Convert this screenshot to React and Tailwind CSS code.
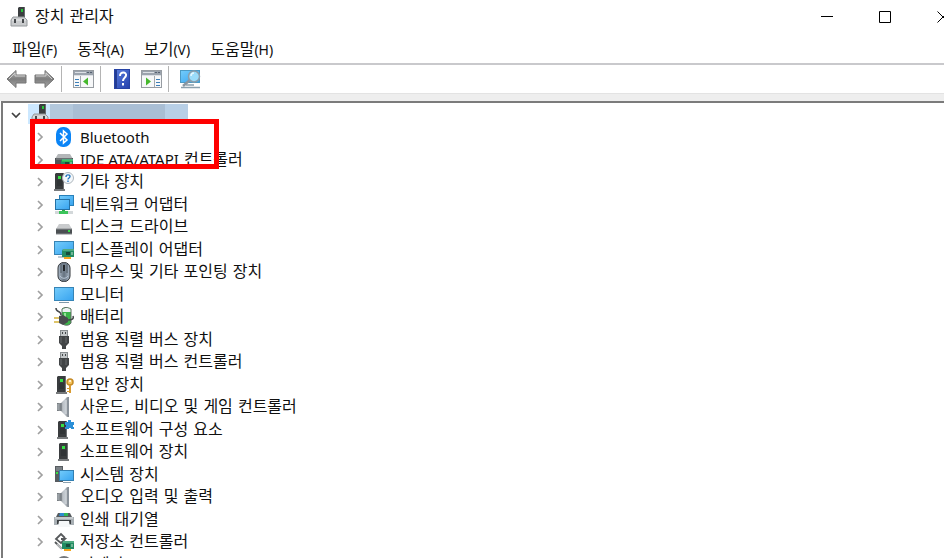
import { useState } from "react";

const ICON = "block h-5 w-5 shrink-0";

function Defs() {
  return (
    <svg className="absolute h-0 w-0" aria-hidden="true">
      <defs>
        <linearGradient id="screen" x1="0" y1="0" x2="1" y2="1">
          <stop offset="0" stopColor="#74ccfb" />
          <stop offset="1" stopColor="#37a3ef" />
        </linearGradient>
        <linearGradient id="steel" x1="0" y1="0" x2="1" y2="0">
          <stop offset="0" stopColor="#6f7478" />
          <stop offset="0.6" stopColor="#c6ccd2" />
          <stop offset="1" stopColor="#7f868d" />
        </linearGradient>
        <linearGradient id="arrow" x1="0" y1="0" x2="0" y2="1">
          <stop offset="0" stopColor="#b9b9b9" />
          <stop offset="0.5" stopColor="#7d7d7d" />
          <stop offset="1" stopColor="#a8a8a8" />
        </linearGradient>
        <linearGradient id="book" x1="0" y1="0" x2="1" y2="1">
          <stop offset="0" stopColor="#5b7fe0" />
          <stop offset="1" stopColor="#2340ab" />
        </linearGradient>
        <linearGradient id="mouse" x1="0" y1="0" x2="1" y2="0">
          <stop offset="0" stopColor="#aebccb" />
          <stop offset="0.5" stopColor="#65727f" />
          <stop offset="1" stopColor="#a9b8c8" />
        </linearGradient>
      </defs>
    </svg>
  );
}

function ComputerIcon() {
  return (
    <svg viewBox="0 0 18 20" className="block h-5 w-[18px] shrink-0">
      <path d="M8 1l1-1h6v13H8z" fill="#3b3e40" />
      <path d="M14 0h1v13h-1z" fill="#696d70" />
      <rect x="11" y="2" width="2" height="3" fill="#25c438" />
      <path d="M3 10h11l3 3v6H1v-6z" fill="#c9cbcd" stroke="#969a9d" />
      <path d="M2 13h14" stroke="#eceeef" />
      <path d="M5 12v4M13 12v4" stroke="#45494c" strokeWidth="2" />
    </svg>
  );
}

function Tower({ x = 0 }) {
  return (
    <g transform={`translate(${x} 0)`}>
      <path d="M1 2l1-1h8v17H1z" fill="#393c3e" />
      <path d="M9 1h1v17H9z" fill="#6d7073" />
      <path d="M0 17h11v2H0z" fill="#777a7c" />
      <path d="M3 9h5M3 11h5M3 13h5" stroke="#292c2e" />
      <rect x="4" y="4" width="3" height="3" fill="#35e044" />
    </g>
  );
}

function Card({ x, y }) {
  return (
    <g transform={`translate(${x} ${y})`}>
      <path d="M1 0h11v8H0V2z" fill="#238b62" />
      <path d="M1 1h11" stroke="#7fc8a0" />
      <rect x="4" y="3" width="4" height="3" fill="#174c3b" />
      <path d="M10 3v3" stroke="#c1e4cb" />
      <path d="M2 8h7v2H2z" fill="#f3a51f" />
    </g>
  );
}

function BluetoothIcon() {
  return (
    <svg viewBox="0 0 20 20" className={ICON}>
      <rect x="2" y="0" width="15" height="20" rx="7" fill="#0a84f6" />
      <path d="M6 6l7 7-3.500 3V4L13 7l-7 7" fill="none" stroke="#fff" strokeWidth="1.500" />
    </svg>
  );
}

function IdeIcon() {
  return (
    <svg viewBox="0 0 20 20" className={ICON}>
      <path d="M4 4h12l3 5H1z" fill="#b3b6b8" />
      <path d="M1 8h18v6H1z" fill="#505457" />
      <path d="M2 9h16" stroke="#858a8d" />
      <Card x={7} y={9} />
      <path d="M8 11h10" stroke="#35e044" />
    </svg>
  );
}

function UnknownIcon() {
  return (
    <svg viewBox="0 0 20 20" className={ICON}>
      <Tower />
      <circle cx="14" cy="6" r="5.500" fill="#f4f8fb" stroke="#aeb6bc" />
      <path d="M12 5c0-3 4-2.500 4-.5 0 1.500-2 1.500-2 3M14 8.500v1.500" fill="none" stroke="#2576bf" strokeWidth="1.400" />
    </svg>
  );
}

function NetworkIcon() {
  return (
    <svg viewBox="0 0 20 20" className={ICON}>
      <rect x="5.500" y="0.500" width="14" height="10" fill="url(#screen)" stroke="#2880b9" />
      <rect x="1.500" y="4.500" width="14" height="10" fill="url(#screen)" stroke="#2471a5" />
      <path d="M8 15h3v2H8z" fill="#29a846" />
      <path d="M1 16h18v3H1z" fill="#d3d8da" />
      <path d="M5 16h9v3H5z" fill="#3bc45a" />
    </svg>
  );
}

function DiskIcon() {
  return (
    <svg viewBox="0 0 20 20" className={ICON}>
      <path d="M5 7h10l3 5H2z" fill="#c9cbcd" />
      <path d="M2 12h16v5H2z" fill="#4b4f52" />
      <path d="M2 12h16M2 17h16" stroke="#888c8f" />
      <rect x="14" y="13" width="2" height="2" fill="#34e044" />
    </svg>
  );
}

function DisplayIcon() {
  return (
    <svg viewBox="0 0 20 20" className={ICON}>
      <rect x="0.500" y="1.500" width="19" height="13" fill="url(#screen)" stroke="#3784b5" />
      <path d="M4 17h6" stroke="#8199a8" />
      <Card x={8} y={9} />
    </svg>
  );
}

function MouseIcon() {
  return (
    <svg viewBox="0 0 20 20" className={ICON}>
      <rect x="4" y="0.500" width="12" height="19" rx="5.500" fill="url(#mouse)" stroke="#303438" />
      <path d="M7 2v9M13 2v9" stroke="#4b545d" />
      <rect x="9" y="3" width="2" height="6" fill="#22262a" />
      <path d="M6 14c2 3 6 3 8 0" fill="none" stroke="#b9c8d7" />
    </svg>
  );
}

function MonitorIcon() {
  return (
    <svg viewBox="0 0 20 20" className={ICON}>
      <rect x="0.500" y="2.500" width="19" height="13" fill="url(#screen)" stroke="#3784b5" />
      <path d="M5 17.500h10" stroke="#8199a8" />
    </svg>
  );
}

function BatteryIcon() {
  return (
    <svg viewBox="0 0 20 20" className={ICON}>
      <path d="M8 2c2-2 6-2 9 0v14c-2 3-7 3-9 0z" fill="#3cb54a" stroke="#5e6b64" />
      <path d="M8.500 2.500c2-2 6-2 8 0V5h-8z" fill="#eef1f4" />
      <path d="M11 6v9" stroke="#96e49a" strokeWidth="2" />
      <path d="M2 1c0 5 5 2 5 7M14 13c4 0 6-1 5-4" fill="none" stroke="#46494b" strokeWidth="1.500" />
      <path d="M5 9l4-1 5 3v4l-5 3-4-2z" fill="#494c4e" />
      <path d="M0 11h5M0 15h5" stroke="#d5b33a" strokeWidth="1.500" />
    </svg>
  );
}

function UsbIcon() {
  return (
    <svg viewBox="0 0 20 20" className={ICON}>
      <rect x="6.500" y="0.500" width="7" height="6" fill="#c3c7c9" stroke="#888d90" />
      <path d="M8 3h1M11 3h1" stroke="#45494b" strokeWidth="2" />
      <path d="M5 6h10v7l-3 3v3H8v-3l-3-3z" fill="#424547" />
      <path d="M7 7v6M12 7v6" stroke="#696d6f" />
    </svg>
  );
}

function SecurityIcon() {
  return (
    <svg viewBox="0 0 20 20" className={ICON}>
      <Tower x={2} />
      <circle cx="16" cy="7" r="3" fill="#f5c45d" stroke="#c58a26" strokeWidth="1.500" />
      <circle cx="16" cy="6" r="1" fill="#fff" />
      <path d="M15 10h2v8h-2zM13 13h3v1h-3zM13 16h3v1h-3z" fill="#d99b31" />
    </svg>
  );
}

function SpeakerIcon() {
  return (
    <svg viewBox="0 0 20 20" className={ICON}>
      <path d="M3 6h4l6-6h2v20h-2l-6-6H3z" fill="url(#steel)" />
      <path d="M7 6v8" stroke="#5f666c" />
      <path d="M4 7v6" stroke="#b6bdc3" />
      <path d="M14 1v18" stroke="#8a929a" strokeWidth="2" />
      <path d="M12 3v14" stroke="#dfe4e8" />
    </svg>
  );
}

function ComponentIcon() {
  return (
    <svg viewBox="0 0 20 20" className={ICON}>
      <Tower x={3} />
      <path d="M11 2h3V0h3v2h3v3h-1v2h1v2h-3V8h-2v1h-4V7h1V5h-1z" fill="#2b8fd7" />
    </svg>
  );
}

function SoftwareIcon() {
  return (
    <svg viewBox="0 0 20 20" className={ICON}>
      <Tower x={4} />
    </svg>
  );
}

function SystemIcon() {
  return (
    <svg viewBox="0 0 20 20" className={ICON}>
      <path d="M1 1h8v16H1z" fill="#575c60" />
      <path d="M2 3h6M2 5h6" stroke="#9ea5aa" />
      <rect x="2" y="7" width="2" height="2" fill="#35e044" />
      <rect x="5.500" y="5.500" width="14" height="10" fill="url(#screen)" stroke="#337fb1" />
      <path d="M9 17.500h8" stroke="#8da1ae" />
    </svg>
  );
}

function PrinterIcon() {
  return (
    <svg viewBox="0 0 20 20" className={ICON}>
      <path d="M4 3h12l2 4H2z" fill="#565b5f" />
      <path d="M6 3h4v3H5z" fill="#2d8ad0" />
      <path d="M10 3h4v3h-4z" fill="#31b85b" />
      <path d="M0 7h20v8H0z" fill="#a8afb4" />
      <path d="M1 8h18" stroke="#e3e6e8" />
      <path d="M3 10h14v4H3z" fill="#3c4043" />
      <path d="M5 11h10l1 6H4z" fill="#f5f7f8" />
    </svg>
  );
}

function StorageIcon() {
  return (
    <svg viewBox="0 0 20 20" className={ICON}>
      <path d="M11 6L7 2 2 7l5 4 4-4H7M1 10l6 6h4" fill="none" stroke="#56595b" strokeWidth="1.800" />
      <path d="M3 12l5 5" stroke="#b5b8ba" strokeWidth="2" />
      <Card x={8} y={9} />
    </svg>
  );
}

function CameraIcon() {
  return (
    <svg viewBox="0 0 20 20" className={ICON}>
      <circle cx="10" cy="9" r="7" fill="#c5c8ca" stroke="#74787b" strokeWidth="2" />
      <circle cx="10" cy="9" r="3" fill="#34383b" />
    </svg>
  );
}

function ArrowIcon({ flip }) {
  return (
    <svg viewBox="0 0 21 20" className={flip ? "block h-5 w-[21px] -scale-x-100" : "block h-5 w-[21px]"}>
      <path d="M1 10l9-8.500V6h10v8H10v4.500z" fill="url(#arrow)" stroke="#747474" strokeLinejoin="round" />
      <path d="M3 10l6-6v3h10" fill="none" stroke="#cecece" />
    </svg>
  );
}

function PanelIcon({ flip }) {
  return (
    <svg viewBox="0 0 21 18" className="block h-[18px] w-[21px]">
      <rect x="0.500" y="0.500" width="20" height="17" fill="#f7f8f9" stroke="#979ca2" />
      <path d="M1 1h19v5H1z" fill="#9ba3ad" />
      <path d="M2 2.500h11M1 5.500h19" stroke="#dce0e5" />
      <path d="M14 2.500h2M17 2.500h2" stroke="#566170" />
      {flip ? (
        <>
          <path d="M13.500 6v11" stroke="#a4a9ae" />
          <path d="M15 9.500h4M15 12.500h4M15 15.500h4" stroke="#3d7fb8" />
          <path d="M5 7.500l5 4-5 4z" fill="#46b82d" />
        </>
      ) : (
        <>
          <path d="M7.500 6v11" stroke="#a4a9ae" />
          <path d="M2 9.500h4M2 12.500h4M2 15.500h4" stroke="#3d7fb8" />
          <path d="M15 7.500l-5 4 5 4z" fill="#46b82d" />
        </>
      )}
    </svg>
  );
}

function HelpIcon() {
  return (
    <svg viewBox="0 0 16 20" className="block h-5 w-4">
      <rect x="0.500" y="0.500" width="15" height="19" fill="url(#book)" stroke="#2743a5" />
      <path d="M2 1v18" stroke="#243c93" strokeWidth="2" />
      <path d="M6 7c0-5 7-4 6-.5-.5 2.500-3 2.500-3 5.500M9 14v2.500" fill="none" stroke="#fff" strokeWidth="2" />
    </svg>
  );
}

function ScanIcon() {
  return (
    <svg viewBox="0 0 21 20" className="block h-5 w-[21px]">
      <rect x="0.500" y="1.500" width="19" height="12" fill="url(#screen)" stroke="#4a9ac5" />
      <path d="M6 16h8M1 18.500h19" stroke="#8ba0ad" strokeWidth="1.500" />
      <path d="M10 11l-7 6" stroke="#8995a0" strokeWidth="2.500" />
      <circle cx="14" cy="7.500" r="5.500" fill="#9adcf9" stroke="#8a9eab" strokeWidth="1.500" />
      <path d="M11 7c0-2 1-3 3-3" fill="none" stroke="#e5f8ff" strokeWidth="1.500" />
    </svg>
  );
}

function Chevron() {
  return (
    <svg viewBox="0 0 8 10" className="block h-[10px] w-2 shrink-0">
      <path d="M2 1l4 4-4 4" fill="none" stroke="#a0a0a0" strokeWidth="1.700" />
    </svg>
  );
}

const menus = [
  { label: "파일", hotkey: "(F)" },
  { label: "동작", hotkey: "(A)" },
  { label: "보기", hotkey: "(V)" },
  { label: "도움말", hotkey: "(H)" },
];

const devices = [
  { latin: "Bluetooth", name: "", icon: BluetoothIcon },
  { latin: "IDE ATA/ATAPI", name: " 컨트롤러", icon: IdeIcon },
  { name: "기타 장치", icon: UnknownIcon },
  { name: "네트워크 어댑터", icon: NetworkIcon },
  { name: "디스크 드라이브", icon: DiskIcon },
  { name: "디스플레이 어댑터", icon: DisplayIcon },
  { name: "마우스 및 기타 포인팅 장치", icon: MouseIcon },
  { name: "모니터", icon: MonitorIcon },
  { name: "배터리", icon: BatteryIcon },
  { name: "범용 직렬 버스 장치", icon: UsbIcon },
  { name: "범용 직렬 버스 컨트롤러", icon: UsbIcon },
  { name: "보안 장치", icon: SecurityIcon },
  { name: "사운드, 비디오 및 게임 컨트롤러", icon: SpeakerIcon },
  { name: "소프트웨어 구성 요소", icon: ComponentIcon },
  { name: "소프트웨어 장치", icon: SoftwareIcon },
  { name: "시스템 장치", icon: SystemIcon },
  { name: "오디오 입력 및 출력", icon: SpeakerIcon },
  { name: "인쇄 대기열", icon: PrinterIcon },
  { name: "저장소 컨트롤러", icon: StorageIcon },
  { name: "카메라", icon: CameraIcon },
];

function TitleBar() {
  return (
    <header className="flex h-[33px] shrink-0 items-center justify-between">
      <div className="flex items-center gap-[7px] pl-[10px]">
        <ComputerIcon />
        <h1 className="text-base leading-5">장치 관리자</h1>
      </div>
      <div className="-mr-7 flex h-full">
        <button aria-label="최소화" className="flex w-[58px] items-center justify-center">
          <svg viewBox="0 0 12 12" className="h-3 w-3"><path d="M0 5.500h12" stroke="#000" /></svg>
        </button>
        <button aria-label="최대화" className="flex w-[58px] items-center justify-center">
          <svg viewBox="0 0 12 12" className="h-3 w-3"><path d="M.5.500h11v11H.5z" fill="none" stroke="#000" /></svg>
        </button>
        <button aria-label="닫기" className="flex w-[58px] items-center justify-center">
          <svg viewBox="0 0 12 12" className="h-3 w-3"><path d="M.5.500l11 11M11.500.500l-11 11" stroke="#000" /></svg>
        </button>
      </div>
    </header>
  );
}

function Toolbar() {
  return (
    <div className="flex h-[29px] shrink-0 items-center border-b border-[#e3e3e3] pl-[6px]">
      <div className="flex items-center gap-[7px] pr-[6px]">
        <button aria-label="뒤로"><ArrowIcon /></button>
        <button aria-label="앞으로"><ArrowIcon flip /></button>
      </div>
      <div className="flex h-[26px] items-center border-l border-[#b4b4b4] pr-[6px] pl-[11px]">
        <button aria-label="콘솔 트리 표시"><PanelIcon /></button>
      </div>
      <div className="flex h-[26px] items-center gap-[11px] border-l border-[#b4b4b4] pr-[6px] pl-[13px]">
        <button aria-label="도움말"><HelpIcon /></button>
        <button aria-label="작업 창 표시"><PanelIcon flip /></button>
      </div>
      <div className="flex h-[26px] items-center border-l border-[#b4b4b4] pl-[11px]">
        <button aria-label="하드웨어 변경 사항 검색"><ScanIcon /></button>
      </div>
    </div>
  );
}

function DeviceTree() {
  const [open, setOpen] = useState(true);

  return (
    <main className="relative ml-px min-h-0 flex-1 overflow-hidden border-t-2 border-l-2 border-[#7b7b7b] pt-px">
      <div className="flex h-[22px] items-center">
        <button
          onClick={() => setOpen(!open)}
          aria-expanded={open}
          aria-label="컴퓨터"
          className="flex w-[25px] justify-center"
        >
          <svg viewBox="0 0 10 8" className="h-2 w-[10px]">
            <path d="M1 2l4 4 4-4" fill="none" stroke="#404040" strokeWidth="1.700" />
          </svg>
        </button>
        <div className="flex h-5 self-start bg-[#cce8ff] pl-[3px]">
          <ComputerIcon />
          <span className="ml-px w-[23px] bg-[#b3c8dc]" />
          <span className="w-[92px] bg-[#a9bed4]" />
          <span className="w-[23px] bg-[#b8cfe6]" />
        </div>
      </div>
      {open && (
        <ul>
          {devices.map(({ latin, name, icon: Icon }) => (
            <li key={latin || name} className="flex items-center pl-[33px] odd:h-[22px] even:h-[23px]">
              <button aria-label="펼치기" className="mr-[10px]"><Chevron /></button>
              <Icon />
              <span className="ml-[6px] text-base leading-5 whitespace-pre">
                {latin && <span className="font-['Noto_Sans',sans-serif] text-[15px]">{latin}</span>}
                {name}
              </span>
            </li>
          ))}
        </ul>
      )}
      <div className="pointer-events-none absolute top-4 left-[27px] h-[50px] w-[189px] border-[5px] border-[#fe0000]" />
    </main>
  );
}

function App() {
  return (
    <div className="flex h-screen flex-col overflow-hidden bg-white font-['DejaVu_Sans','Noto_Sans_CJK_KR',sans-serif] text-[#101010]">
      <Defs />
      <TitleBar />
      <nav className="flex h-8 shrink-0 items-center gap-5 border-b-2 border-[#c9c9cc] pt-1 pl-3">
        {menus.map((menu) => (
          <button key={menu.label} className="text-base leading-5 whitespace-nowrap">
            {menu.label}
            <span className="font-['Noto_Sans',sans-serif] text-sm">{menu.hotkey}</span>
          </button>
        ))}
      </nav>
      <Toolbar />
      <div className="h-[7px] shrink-0 bg-[#eeeeee]" />
      <DeviceTree />
    </div>
  );
}

export default App;
